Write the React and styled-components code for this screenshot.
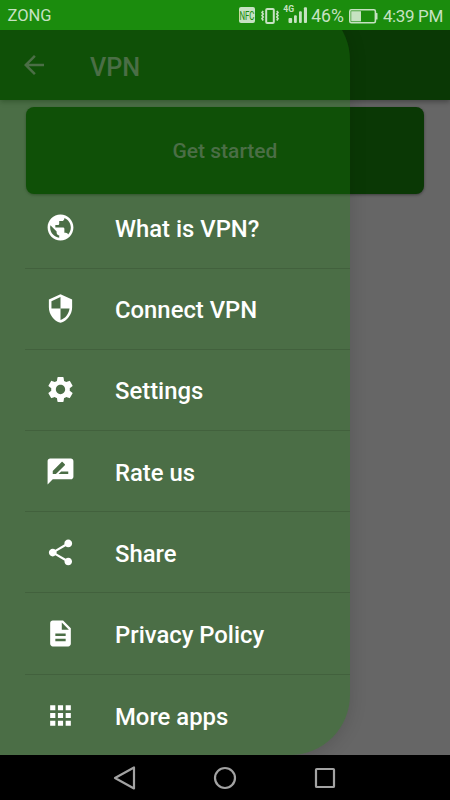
import styled, { createGlobalStyle } from "styled-components";
import {
  MdApps,
  MdArrowBack,
  MdDescription,
  MdPublic,
  MdRateReview,
  MdSecurity,
  MdSettings,
  MdShare,
} from "react-icons/md";

const GlobalStyle = createGlobalStyle`
  * {
    box-sizing: border-box;
  }

  body {
    margin: 0;
    font-family: Roboto, "Liberation Sans", sans-serif;
  }
`;

const Phone = styled.div`
  width: 450px;
  height: 800px;
  display: flex;
  flex-direction: column;
  position: relative;
  overflow: hidden;
  background: #000;
`;

const StatusBar = styled.header`
  height: 30px;
  flex-shrink: 0;
  display: flex;
  align-items: center;
  justify-content: space-between;
  padding: 2px 7px 0 7.5px;
  background: #1b8c0d;
  color: #c6e2c2;
  line-height: 28px;
  position: relative;
  z-index: 3;
`;

const Carrier = styled.span`
  font-size: 16.5px;
`;

const StatusItems = styled.div`
  display: flex;
  align-items: center;
`;

const BatteryLevel = styled.span`
  margin: 0 5px 0 3px;
  font-size: 17.6px;
`;

const Clock = styled.span`
  margin-left: 5px;
  font-size: 17px;
  letter-spacing: -0.35px;
  white-space: nowrap;
`;

const Page = styled.main`
  flex: 1;
  display: flex;
  flex-direction: column;
  background: #666;
`;

const Toolbar = styled.div`
  height: 70px;
  display: flex;
  align-items: center;
  padding: 0 0 1px 19px;
  background: #0a3805;
  color: #666;
  box-shadow: 0 2px 5px rgba(0, 0, 0, 0.32);
`;

const Title = styled.h1`
  margin: 5px 0 0 41px;
  font-size: 25.2px;
  font-weight: 500;
`;

const StartButton = styled.button`
  height: 87px;
  margin: 6.5px 26px 0;
  padding: 2px 0 0;
  border: 0;
  border-radius: 8px;
  background: #0a3805;
  color: #666;
  font: 500 21px Roboto, "Liberation Sans", sans-serif;
  box-shadow: 0 1px 3px rgba(0, 0, 0, 0.4);
`;

const Drawer = styled.nav`
  position: absolute;
  z-index: 2;
  top: 0;
  left: 0;
  width: 350px;
  height: 755px;
  padding-top: 187.5px;
  border-radius: 0 60px 60px 0;
  overflow: hidden;
  background: rgba(25, 125, 11, 0.35);
  box-shadow: 0 3px 18px rgba(0, 0, 0, 0.14);
`;

const MenuItem = styled.a`
  height: 81.2px;
  margin-left: 25px;
  padding-left: 19.5px;
  display: flex;
  align-items: center;
  gap: 39.5px;
  color: #fff;
  border-bottom: 1px solid #42613d;

  &:last-child {
    border-bottom: 0;
  }

  svg {
    flex-shrink: 0;
  }
`;

const MenuLabel = styled.span`
  padding-top: 3px;
  font-size: 23.85px;
  font-weight: 500;
  white-space: nowrap;
`;

const NavBar = styled.footer`
  height: 45px;
  flex-shrink: 0;
  display: flex;
  align-items: center;
  justify-content: center;
  gap: 76px;
  background: #000;
`;

const menu = [
  { label: "What is VPN?", icon: MdPublic },
  { label: "Connect VPN", icon: MdSecurity },
  { label: "Settings", icon: MdSettings },
  { label: "Rate us", icon: MdRateReview },
  { label: "Share", icon: MdShare },
  { label: "Privacy Policy", icon: MdDescription },
  { label: "More apps", icon: MdApps },
];

const NfcIcon = styled.span`
  width: 16px;
  height: 16px;
  margin: -2px 6px 0 0;
  border-radius: 2px;
  background: #c6e2c2;
  color: #1b8c0d;
  display: flex;
  align-items: center;
  justify-content: center;

  span {
    font-size: 13.5px;
    line-height: 16px;
    transform: scaleX(0.58);
  }
`;

const Signal = styled.div`
  width: 25px;
  height: 28px;
  margin-left: 4px;
  position: relative;

  span {
    position: absolute;
    top: 1.5px;
    left: 0;
    font-size: 8.6px;
    line-height: 10px;
    font-weight: 700;
  }

  svg {
    display: block;
  }
`;

function VibrateIcon() {
  return (
    <svg width="18" height="16" viewBox="0 0 18 16" fill="none" stroke="currentColor">
      <rect x="5.2" y="1" width="7.6" height="14" rx="1" strokeWidth="2" />
      <path d="M2.2 3L1 4.5 2.2 6 1 7.5 2.2 9 1 10.5 2.2 12.5M15.8 3L17 4.5 15.8 6 17 7.5 15.8 9l1.2 1.5-1.2 2" strokeWidth="1.7" />
    </svg>
  );
}

function SignalIcon() {
  return (
    <Signal>
      <span>4G</span>
      <svg width="25" height="28" viewBox="0 0 25 28" fill="currentColor">
        <rect x="5.5" y="16" width="3.6" height="5" rx="1" />
        <rect x="11" y="13.3" width="2.8" height="7.7" rx="1" />
        <rect x="16" y="9.3" width="2.8" height="11.7" rx="1" />
        <rect x="20.9" y="5.3" width="3.1" height="15.7" rx="1" />
      </svg>
    </Signal>
  );
}

function BatteryIcon() {
  return (
    <svg width="29" height="15" viewBox="0 0 29 15" fill="currentColor">
      <rect x="0.8" y="0.8" width="25.6" height="13" rx="1.6" fill="none" stroke="currentColor" strokeWidth="1.6" />
      <rect x="2.2" y="2.2" width="9.8" height="10.2" />
      <rect x="26.5" y="4" width="2" height="6.5" rx="0.6" />
    </svg>
  );
}

function App() {
  return (
    <>
      <GlobalStyle />
      <Phone>
        <StatusBar>
          <Carrier>ZONG</Carrier>
          <StatusItems>
            <NfcIcon><span>NFC</span></NfcIcon>
            <VibrateIcon />
            <SignalIcon />
            <BatteryLevel>46%</BatteryLevel>
            <BatteryIcon />
            <Clock>4:39 PM</Clock>
          </StatusItems>
        </StatusBar>

        <Page>
          <Toolbar>
            <MdArrowBack size={30} />
            <Title>VPN</Title>
          </Toolbar>
          <StartButton type="button">Get started</StartButton>
        </Page>

        <Drawer>
          {menu.map(({ label, icon: Icon }) => (
            <MenuItem key={label}>
              <Icon size={31} />
              <MenuLabel>{label}</MenuLabel>
            </MenuItem>
          ))}
        </Drawer>

        <NavBar>
          <svg width="24" height="26" viewBox="0 0 24 26" fill="none" stroke="#a3a3a3" strokeWidth="2.2" strokeLinejoin="round">
            <path d="M21 2.5v21L2 13z" />
          </svg>
          <svg width="24" height="24" viewBox="0 0 24 24" fill="none" stroke="#a3a3a3" strokeWidth="2.2">
            <circle cx="12" cy="12" r="10" />
          </svg>
          <svg width="24" height="24" viewBox="0 0 24 24" fill="none" stroke="#a3a3a3" strokeWidth="2.2">
            <rect x="3" y="3" width="18" height="18" rx="0.8" />
          </svg>
        </NavBar>
      </Phone>
    </>
  );
}

export default App;
